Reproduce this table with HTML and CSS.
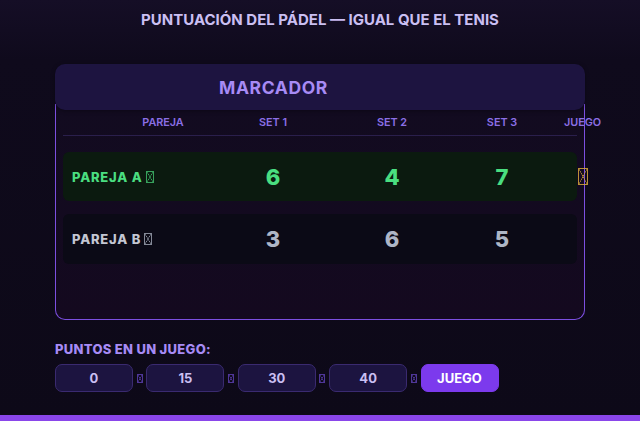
FILE: index.html
```html
<!DOCTYPE html>
<html lang="es">
<head>
<meta charset="utf-8">
<title>Marcador pádel</title>
<link rel="stylesheet" href="styles.css">
</head>
<body>
<div class="page">
  <h1 class="title">PUNTUACIÓN DEL PÁDEL — IGUAL QUE EL TENIS</h1>
  <section class="board">
    <div class="board-head"><span class="board-title">MARCADOR</span></div>
    <div class="board-body">
      <div class="grid head-row">
        <div class="c-name hd">PAREJA</div>
        <div class="c hd">SET 1</div>
        <div class="c hd">SET 2</div>
        <div class="c hd">SET 3</div>
        <div class="c-game hd">JUEGO</div>
      </div>
      <div class="grid row row-a">
        <div class="name">PAREJA A <span class="tofu t-green"></span></div>
        <div class="c num">6</div>
        <div class="c num">4</div>
        <div class="c num">7</div>
        <div class="c-game"><span class="tofu t-gold"></span></div>
      </div>
      <div class="grid row row-b">
        <div class="name">PAREJA B <span class="tofu t-gray"></span></div>
        <div class="c num">3</div>
        <div class="c num">6</div>
        <div class="c num">5</div>
        <div class="c-game"></div>
      </div>
    </div>
  </section>
  <section class="points">
    <div class="points-label">PUNTOS EN UN JUEGO:</div>
    <div class="steps">
      <span class="step">0</span><span class="tofu t-small"></span>
      <span class="step">15</span><span class="tofu t-small"></span>
      <span class="step">30</span><span class="tofu t-small"></span>
      <span class="step">40</span><span class="tofu t-small"></span>
      <span class="step step-on">JUEGO</span>
    </div>
  </section>
</div>
<div class="bottom-bar"></div>
</body>
</html>
```
FILE: styles.css
```css
* { box-sizing: border-box; }
html, body { margin: 0; padding: 0; }
body {
  width: 640px;
  height: 421px;
  overflow: hidden;
  background: linear-gradient(180deg, #150e26 0px, #0f0a1c 60px, #0d0918 100%);
  font-family: "Inter", "Liberation Sans", sans-serif;
  display: flex;
  flex-direction: column;
}
.page {
  flex: 1;
  width: 530px;
  margin: 0 auto;
}
.title {
  margin: 0;
  padding-top: 11px;
  height: 64px;
  text-align: center;
  font-size: 15px;
  font-weight: 700;
  letter-spacing: 0;
  color: #cabff2;
  line-height: 18px;
  width: 640px;
  margin-left: -55px;
}
.board { position: relative; }
.board-head {
  position: relative;
  z-index: 2;
  height: 46px;
  background: #1d1440;
  border-radius: 10px;
  padding-left: 164px;
  display: flex;
  align-items: center;
  box-shadow: 0 1px 4px rgba(0,0,0,0.35);
}
.board-title {
  font-size: 17.5px;
  font-weight: 700;
  color: #a78bf5;
  letter-spacing: 0.6px;
}
.board-body {
  position: relative;
  z-index: 1;
  margin-top: -6px;
  height: 216px;
  border: 1.5px solid #7c4fe0;
  border-top: none;
  border-radius: 0 0 10px 10px;
  background: linear-gradient(180deg, #120b20, #14091f);
  padding: 6px 7px 0 7px;
}
.grid {
  display: grid;
  grid-template-columns: 160px 100px 138px 82px 34px;
  width: 514px;
  align-items: center;
}
.head-row {
  height: 26px;
  border-bottom: 1.5px solid #2a1f4c;
}
.hd {
  font-size: 10.8px;
  font-weight: 600;
  color: #8b6fe6;
}
.c-name.hd { text-align: center; padding-left: 40px; }
.c { text-align: center; }
.c-game { position: relative; white-space: nowrap; }
.c-game.hd { padding-left: 21px; }
.row { height: 49px; border-radius: 6px; }
.row-a { margin-top: 16px; background: #0b1a0f; }
.row-b { margin-top: 13px; height: 50px; background: #0b0a16; }
.name {
  padding-left: 9px;
  font-size: 13px;
  font-weight: 800;
  letter-spacing: 0.8px;
  display: flex;
  align-items: center;
  gap: 3px;
}
.row-a .name { color: #4ade80; }
.row-b .name { color: #c3c6d2; }
.num {
  font-size: 22px;
  font-weight: 800;
}
.row-a .num { color: #4ade80; }
.row-b .num { color: #aeb6c6; }
.tofu {
  display: inline-block;
  position: relative;
  width: 8px;
  height: 12px;
  border: 1px solid currentColor;
  background:
    linear-gradient(to bottom right, transparent calc(50% - 0.6px), currentColor 50%, transparent calc(50% + 0.6px)),
    linear-gradient(to top right, transparent calc(50% - 0.6px), currentColor 50%, transparent calc(50% + 0.6px));
  opacity: 0.85;
}
.t-green { color: #3fb96a; }
.t-gray { color: #9aa0ae; }
.t-gold {
  color: #d9a93a;
  width: 10px;
  height: 17px;
  position: absolute;
  left: 35px;
  top: -9px;
}
.t-small {
  color: #5b3fb0;
  width: 6px;
  height: 9px;
  margin: 0 3.7px;
  align-self: center;
}
.points { padding-top: 21px; }
.points-label {
  font-size: 13px;
  font-weight: 800;
  color: #a78bf5;
  letter-spacing: 0.3px;
  line-height: 16px;
}
.steps {
  display: flex;
  align-items: center;
  margin-top: 7px;
}
.step {
  width: 78px;
  height: 28px;
  border-radius: 7px;
  background: #1c1440;
  border: 1px solid #3a2a70;
  color: #cabff2;
  font-size: 13px;
  font-weight: 700;
  display: flex;
  align-items: center;
  justify-content: center;
}
.step-on {
  background: #7c3aed;
  border-color: #7c3aed;
  color: #ffffff;
}
.bottom-bar {
  height: 6px;
  background: #8a46ea;
  flex: none;
}
```
